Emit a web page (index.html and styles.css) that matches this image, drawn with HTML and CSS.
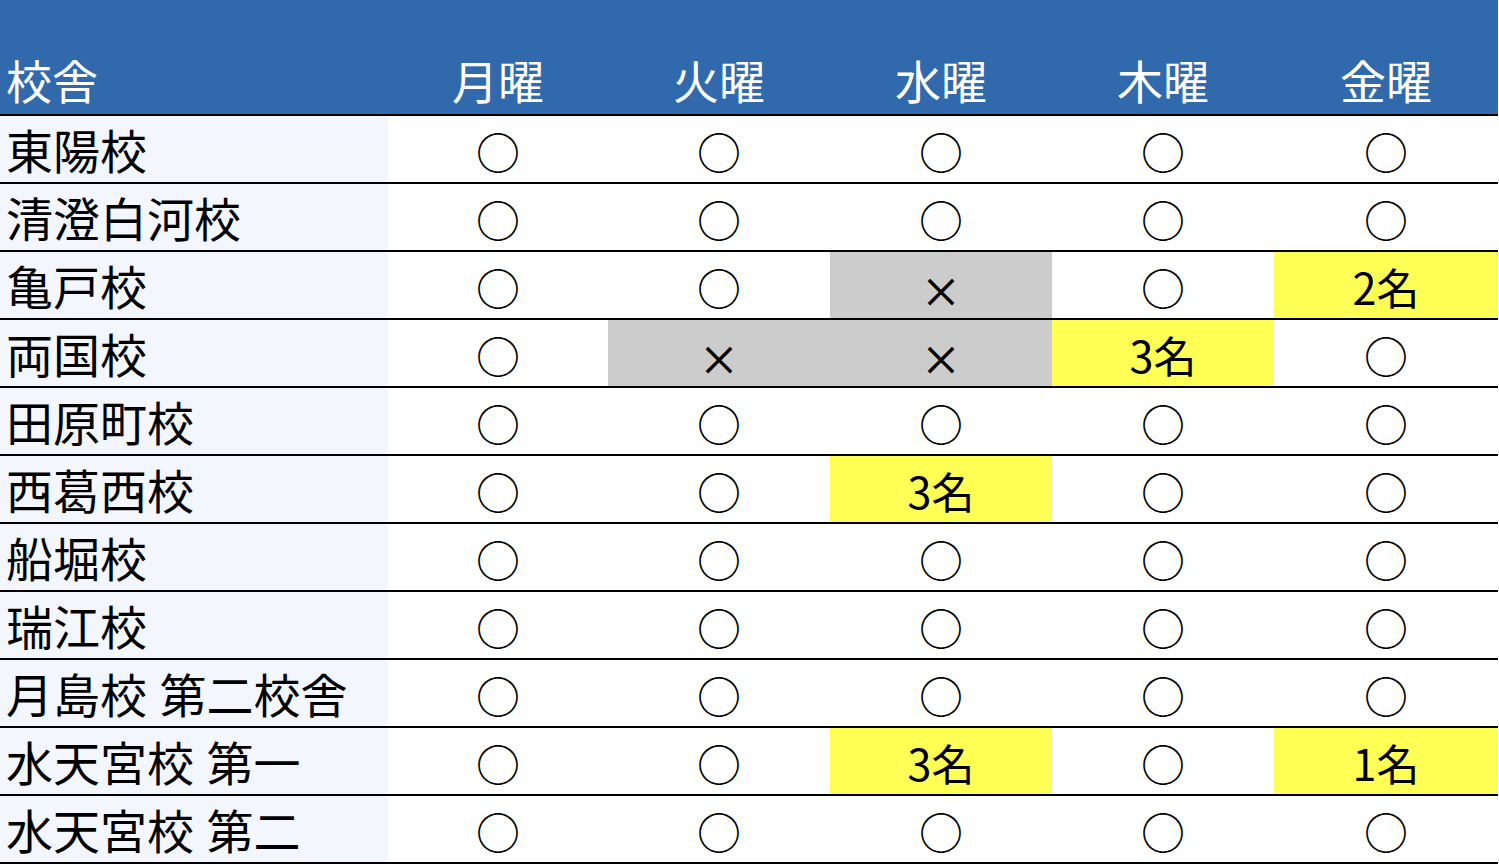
FILE: index.html
```html
<!DOCTYPE html>
<html lang="ja">
<head>
<meta charset="utf-8">
<title>校舎別 受付状況</title>
<link rel="stylesheet" href="styles.css">
</head>
<body>
<table class="schedule">
  <colgroup>
    <col class="col-name">
    <col class="col-d1">
    <col class="col-d2">
    <col class="col-d3">
    <col class="col-d4">
    <col class="col-d5">
  </colgroup>
  <thead>
    <tr>
      <th class="name">校舎</th>
      <th>月曜</th>
      <th>火曜</th>
      <th>水曜</th>
      <th>木曜</th>
      <th>金曜</th>
    </tr>
  </thead>
  <tbody>
    <tr><td class="name">東陽校</td><td class="ok">○</td><td class="ok">○</td><td class="ok">○</td><td class="ok">○</td><td class="ok">○</td></tr>
    <tr><td class="name">清澄白河校</td><td class="ok">○</td><td class="ok">○</td><td class="ok">○</td><td class="ok">○</td><td class="ok">○</td></tr>
    <tr><td class="name">亀戸校</td><td class="ok">○</td><td class="ok">○</td><td class="ng">×</td><td class="ok">○</td><td class="few">2名</td></tr>
    <tr><td class="name">両国校</td><td class="ok">○</td><td class="ng">×</td><td class="ng">×</td><td class="few">3名</td><td class="ok">○</td></tr>
    <tr><td class="name">田原町校</td><td class="ok">○</td><td class="ok">○</td><td class="ok">○</td><td class="ok">○</td><td class="ok">○</td></tr>
    <tr><td class="name">西葛西校</td><td class="ok">○</td><td class="ok">○</td><td class="few">3名</td><td class="ok">○</td><td class="ok">○</td></tr>
    <tr><td class="name">船堀校</td><td class="ok">○</td><td class="ok">○</td><td class="ok">○</td><td class="ok">○</td><td class="ok">○</td></tr>
    <tr><td class="name">瑞江校</td><td class="ok">○</td><td class="ok">○</td><td class="ok">○</td><td class="ok">○</td><td class="ok">○</td></tr>
    <tr><td class="name">月島校 第二校舎</td><td class="ok">○</td><td class="ok">○</td><td class="ok">○</td><td class="ok">○</td><td class="ok">○</td></tr>
    <tr><td class="name">水天宮校 第一</td><td class="ok">○</td><td class="ok">○</td><td class="few">3名</td><td class="ok">○</td><td class="few">1名</td></tr>
    <tr><td class="name">水天宮校 第二</td><td class="ok">○</td><td class="ok">○</td><td class="ok">○</td><td class="ok">○</td><td class="ok">○</td></tr>
  </tbody>
</table>
</body>
</html>
```

FILE: styles.css
```css
html, body {
  margin: 0;
  padding: 0;
  background: #ffffff;
}

body {
  font-family: "Noto Sans CJK JP", "Noto Sans", sans-serif;
  color: #000000;
}

.schedule {
  width: 1498px;
  table-layout: fixed;
  border-collapse: separate;
  border-spacing: 0;
}

.col-name { width: 388px; }
.col-d1 { width: 220px; }
.col-d2 { width: 222px; }
.col-d3 { width: 222px; }
.col-d4 { width: 222px; }
.col-d5 { width: 224px; }

.schedule th {
  background: #3169ad;
  color: #ffffff;
  font-weight: 400;
  font-size: 46px;
  line-height: 66px;
  height: 116px;
  padding: 0 0 2px 0;
  vertical-align: bottom;
  text-align: center;
  border-bottom: 2px solid #000000;
  box-sizing: border-box;
}

.schedule th.name {
  text-align: left;
  padding-left: 6px;
}

.schedule td {
  font-size: 46px;
  line-height: 66px;
  padding: 0;
  text-align: center;
  vertical-align: middle;
  border-bottom: 2px solid #000000;
  white-space: nowrap;
}

.schedule td.name {
  text-align: left;
  padding-left: 6px;
  background: #f3f6fd;
  word-spacing: 2px;
  font-size: 47px;
}

.schedule td.ok {
  font-size: 44px;
  line-height: 62px;
  padding-top: 4px;
}

.schedule td.ng {
  background: #cccccc;
  font-size: 40px;
  line-height: 56px;
  padding-top: 10px;
  -webkit-text-stroke: 0.6px #000000;
}

.schedule td.few {
  background: #ffff55;
  font-size: 43px;
  line-height: 64px;
  padding-top: 2px;
}
```
